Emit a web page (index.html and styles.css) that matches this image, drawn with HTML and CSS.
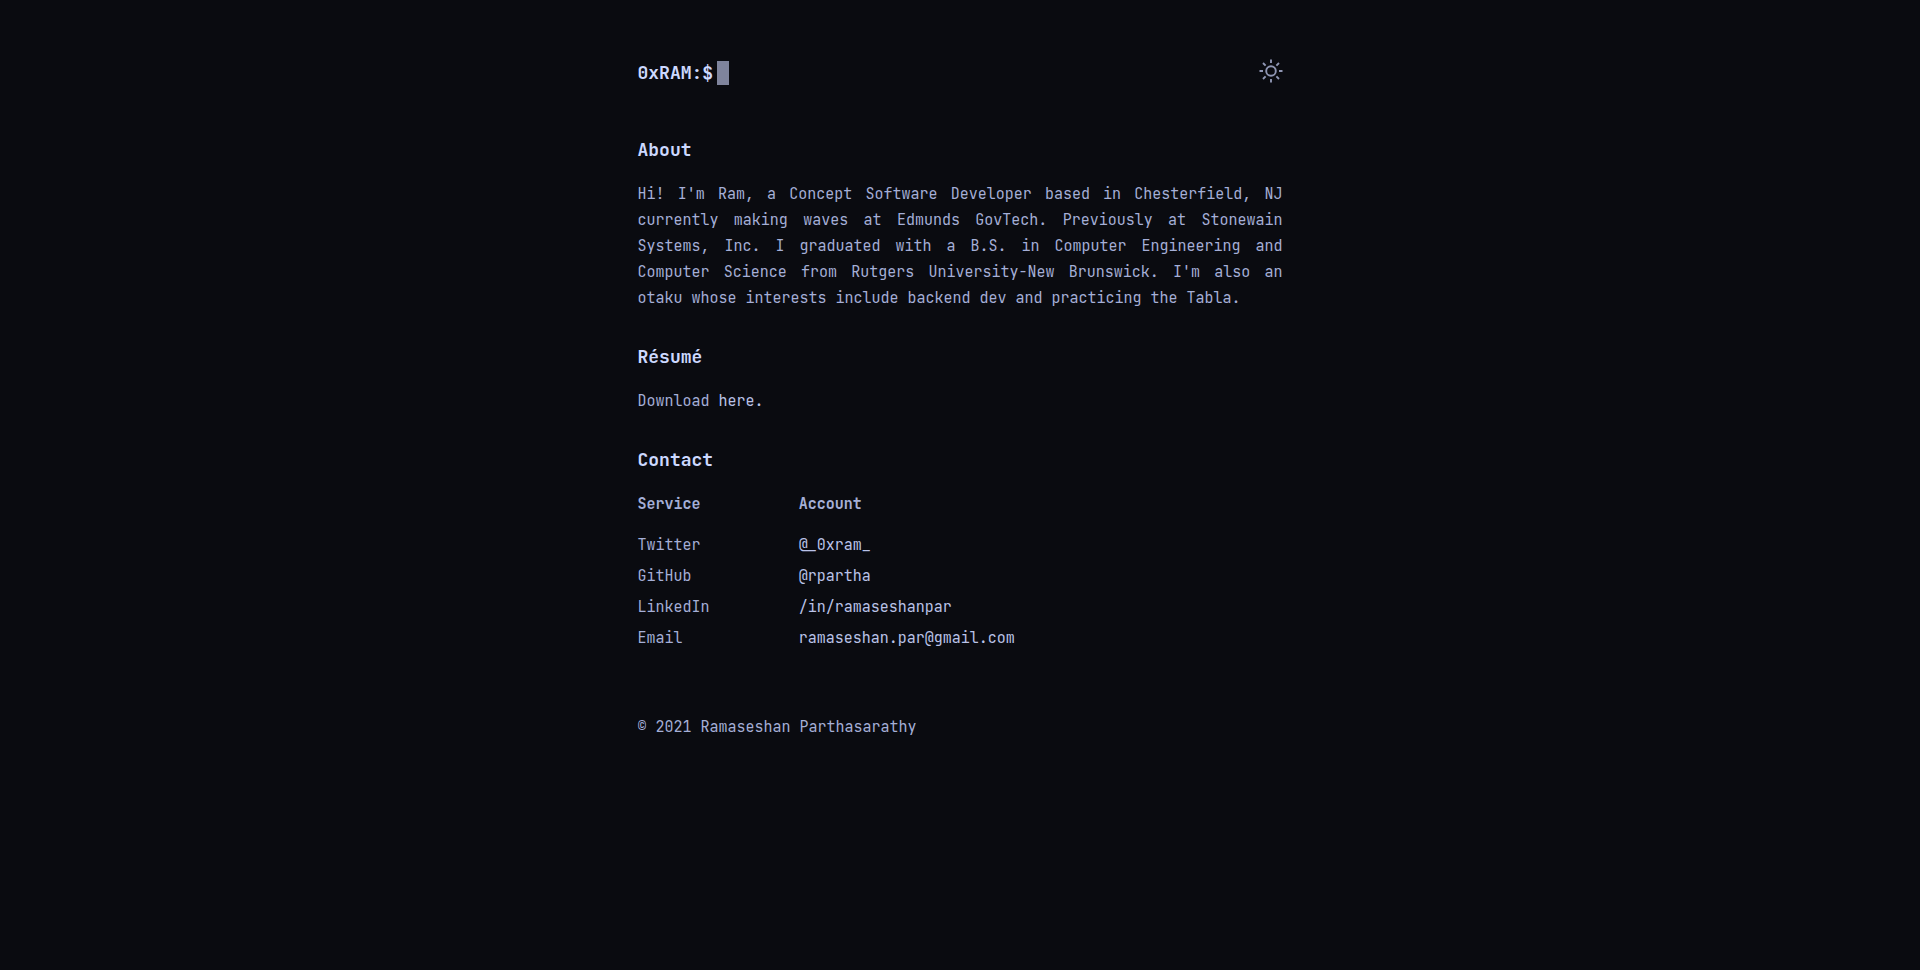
FILE: index.html
```html
<!DOCTYPE html>
<html lang="en">
<head>
<meta charset="utf-8">
<meta name="viewport" content="width=device-width, initial-scale=1">
<title>0xRAM</title>
<link rel="stylesheet" href="styles.css">
</head>
<body>
<div class="page">
  <header class="header">
    <a class="logo" href="#"><span>0xRAM:$</span><span class="cursor"></span></a>
    <button class="theme-toggle" type="button" aria-label="Toggle theme">
      <svg class="sun" viewBox="0 0 24 24" aria-hidden="true">
        <circle cx="12" cy="12" r="4.800"/>
        <path d="M12 .5v3.500M12 20v3.500M.5 12h3.500M20 12h3.500M4 4l2.600 2.600M17.400 17.400l2.600 2.600M4 20l2.600-2.600M17.400 6.600l2.600-2.600"/>
      </svg>
    </button>
  </header>
  <main>
    <section class="section">
      <h1 class="title">About</h1>
      <p class="text">Hi! I'm Ram, a Concept Software Developer based in Chesterfield, NJ currently making waves at Edmunds GovTech. Previously at Stonewain Systems, Inc. I graduated with a B.S. in Computer Engineering and Computer Science from Rutgers University-New Brunswick. I'm also an otaku whose interests include backend dev and practicing the Tabla.</p>
    </section>
    <section class="section">
      <h1 class="title">Résumé</h1>
      <p class="text">Download <a class="link" href="#">here.</a></p>
    </section>
    <section class="section">
      <h1 class="title">Contact</h1>
      <table class="contacts">
        <thead>
          <tr><th scope="col">Service</th><th scope="col">Account</th></tr>
        </thead>
        <tbody>
          <tr><td>Twitter</td><td><a class="link" href="#">@_0xram_</a></td></tr>
          <tr><td>GitHub</td><td><a class="link" href="#">@rpartha</a></td></tr>
          <tr><td>LinkedIn</td><td><a class="link" href="#">/in/ramaseshanpar</a></td></tr>
          <tr><td>Email</td><td><a class="link" href="#">ramaseshan.par@gmail.com</a></td></tr>
        </tbody>
      </table>
    </section>
  </main>
  <footer class="footer">© 2021 Ramaseshan Parthasarathy</footer>
</div>
</body>
</html>
```

FILE: styles.css
```css
* {
  box-sizing: border-box;
}

body {
  margin: 0;
  background: #0a0b10;
  color: #a5afd7;
  font: 15px/26px "JetBrains Mono", "DejaVu Sans Mono", monospace;
}

.page {
  max-width: 645px;
  margin: 0 auto;
  padding: 59px 0;
}

.header {
  display: flex;
  justify-content: space-between;
  align-items: flex-start;
  margin-bottom: 47px;
}

.logo {
  display: flex;
  align-items: center;
  gap: 4px;
  color: #cdd9ff;
  font-size: 18px;
  line-height: 28px;
  font-weight: 700;
  text-decoration: none;
}

.cursor {
  width: 12px;
  height: 24px;
  background: #7f849c;
}

.theme-toggle {
  display: flex;
  padding: 0;
  border: 0;
  background: none;
  color: #8f96b3;
  cursor: pointer;
}

.sun {
  width: 24px;
  height: 24px;
  fill: none;
  stroke: currentColor;
  stroke-width: 1.9;
}

.section {
  margin-bottom: 30px;
}

.title {
  margin: 0 0 15px;
  color: #cdd9ff;
  font-size: 18px;
  line-height: 32px;
}

.text {
  margin: 0;
  text-align: justify;
}

.link {
  color: #bac3e8;
  text-decoration: none;
}

.contacts {
  width: 100%;
  table-layout: fixed;
  border-collapse: collapse;
}

.contacts th,
.contacts td {
  padding: 0 0 5px;
  text-align: left;
}

.contacts th {
  width: 75%;
  padding-bottom: 15px;
}

.contacts th:first-child {
  width: 25%;
}

.footer {
  padding-top: 28px;
}
```
